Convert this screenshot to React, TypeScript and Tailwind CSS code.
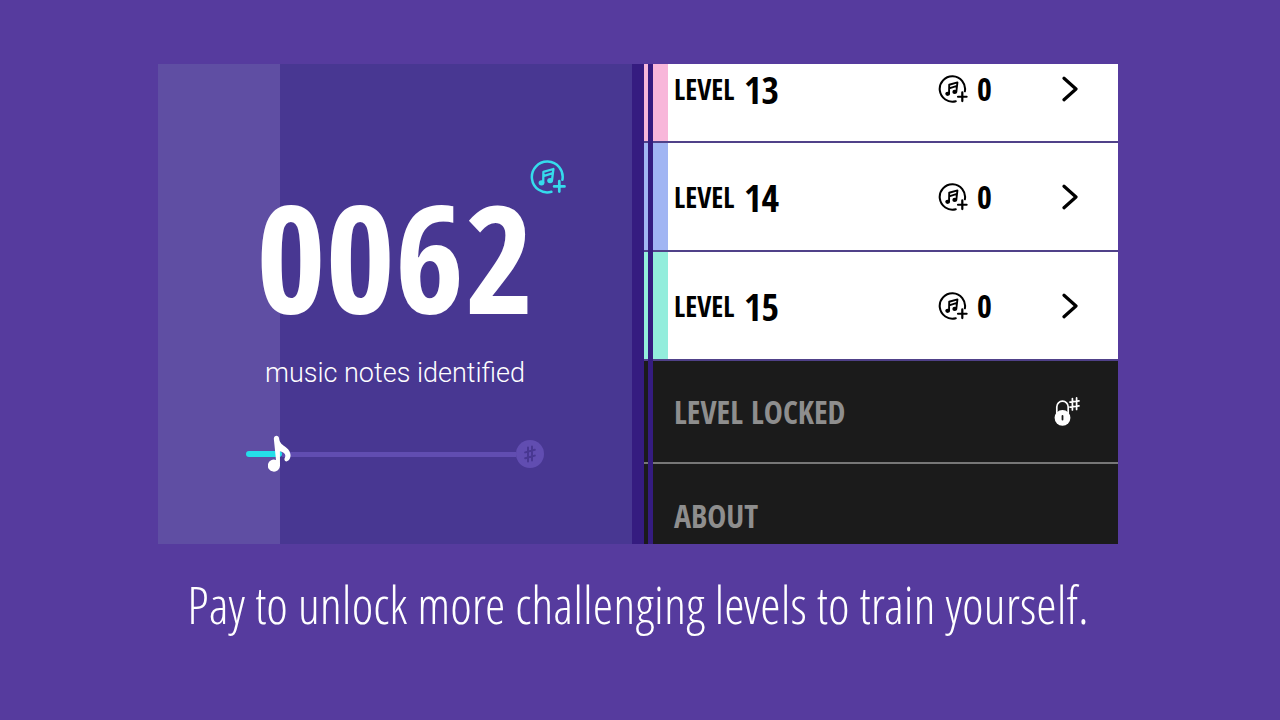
const levels = [
  { number: 13, notes: 0, color: 'bg-[#f8b7da]', row: 'h-[79px] pb-[28px]' },
  { number: 14, notes: 0, color: 'bg-[#a1b5f3]', row: 'h-[109px]' },
  { number: 15, notes: 0, color: 'bg-[#93eddc]', row: 'h-[109px]' },
];

function NotesIcon({ className }: { className: string }) {
  return (
    <svg viewBox="0 0 36 34" className={className} fill="none" stroke="currentColor" aria-hidden="true">
      <path d="M21.4 31.8A15.4 15.4 0 1 1 32.4 19.8" strokeWidth="2.5" strokeLinecap="round" />
      <path d="M13.2 22.6L13.4 11.8L23.4 9L22 20.4M13.3 16.2L22.8 13.2" strokeWidth="2.3" strokeLinecap="round" strokeLinejoin="round" />
      <ellipse cx="11.5" cy="22.8" rx="2.9" ry="2.6" fill="currentColor" stroke="none" />
      <ellipse cx="20.1" cy="20.6" rx="2.9" ry="2.6" fill="currentColor" stroke="none" />
      <path d="M29.3 21.2V31.6M24.1 26.4H34.5" strokeWidth="2.7" strokeLinecap="round" />
    </svg>
  );
}

function EighthNote() {
  return (
    <svg viewBox="0 0 24 38" className="h-[38px] w-6" aria-hidden="true">
      <path
        d="M5.9 4.6C5.1 .2 10.7 -.6 11.1 3.4C11.5 8.2 15 10 18.1 12.4C23.6 16.6 23.6 22.4 20.4 25.6C18 27.6 15.4 25.6 16.8 22.8C18.4 19.4 16.4 17.6 11.9 16.2L12 30.8A6.1 6 0 1 1 8 25Z"
        fill="#fff"
      />
    </svg>
  );
}

function Sharp() {
  return (
    <svg viewBox="0 0 12 18" className="h-[18px] w-3" fill="none" stroke="currentColor" strokeWidth="2" aria-hidden="true">
      <path d="M4 2.6V16.4M8 1.6V15.4M1.2 7.4L10.8 4.8M1.2 13.2L10.8 10.6" strokeLinecap="round" />
    </svg>
  );
}

function LockIcon() {
  return (
    <svg viewBox="0 0 26 30" className="h-[30px] w-[26px]" fill="none" aria-hidden="true">
      <path d="M2.8 17V10A5.7 5.8 0 0 1 14.2 10V17" stroke="#fff" strokeWidth="1.7" />
      <circle cx="8.5" cy="20.8" r="7.9" fill="#fff" />
      <path d="M8.5 19V22.6" stroke="#1b1b1b" strokeWidth="1.8" strokeLinecap="round" />
      <path d="M18.4 1.6V13M22.6 .9V12.4M16 5.2L25 3.8M16 10.2L25 8.8" stroke="#fff" strokeWidth="1.7" strokeLinecap="round" />
    </svg>
  );
}

function Stripes({ color }: { color: string }) {
  return (
    <span className="flex self-stretch" aria-hidden="true">
      <span className={`w-1 ${color}`} />
      <span className="w-[5px] bg-[#351c80]" />
      <span className={`w-[15px] ${color}`} />
    </span>
  );
}

function Score() {
  return (
    <section className="flex min-w-0 flex-1 bg-[linear-gradient(to_right,#5f4ea3_122px,#483792_122px)]">
      <div className="flex w-full flex-col items-center pt-24">
        <div className="flex w-full justify-end pr-[66px]">
          <NotesIcon className="h-[34px] w-9 text-[#35dcec]" />
        </div>
        <p className="-mt-[4px] text-[150px] leading-[132px] font-bold text-white">0062</p>
        <p className="mt-[33px] font-['Roboto',sans-serif] text-[27px] leading-9 font-light text-white">music notes identified</p>
        <div className="relative mt-[42px] flex h-[42px] w-[298px] items-center">
          <span className="h-[6px] w-9 rounded-full bg-[#25deea]" />
          <span className="h-[5px] flex-1 bg-[#614db1]" />
          <span className="flex size-7 items-center justify-center rounded-full bg-[#614db1] text-[#483792]">
            <Sharp />
          </span>
          <span className="absolute top-[2px] left-[22px]">
            <EighthNote />
          </span>
          <input
            type="range"
            min={0}
            max={500}
            defaultValue={62}
            aria-label="music notes identified"
            className="absolute inset-0 w-full cursor-pointer opacity-0"
          />
        </div>
      </div>
    </section>
  );
}

function LevelList() {
  return (
    <nav className="flex min-w-0 flex-1 flex-col border-l-12 border-[#351c80]">
      {levels.map((level) => (
        <button key={level.number} type="button" className="flex bg-white text-left font-bold text-black">
          <Stripes color={`border-b-2 border-[#504189] ${level.color}`} />
          <span className={`flex flex-1 items-center border-b-2 border-[#504189] pr-10 pl-[6px] ${level.row}`}>
            <span className="w-[70px] text-[28px] leading-8">LEVEL</span>
            <span className="flex-1 text-[38px] leading-10">{level.number}</span>
            <NotesIcon className="h-[28px] w-[30px]" />
            <span className="w-[94px] pl-[9px] text-[32px] leading-8">{level.notes}</span>
            <svg viewBox="0 0 16 26" className="h-[26px] w-4" fill="none" stroke="#000" strokeWidth="3.2" strokeLinecap="round" strokeLinejoin="round" aria-hidden="true">
              <path d="M2 2.2L14 13L2 23.8" />
            </svg>
          </span>
        </button>
      ))}
      <button type="button" disabled className="flex bg-[#1b1b1b] text-left text-[32px] leading-10 font-bold text-[#8e8e8e]">
        <Stripes color="border-b-2 border-[#777777] bg-[#1b1b1b]" />
        <span className="flex h-[103px] flex-1 items-center justify-between border-b-2 border-[#777777] pr-[38px] pl-[6px]">
          LEVEL LOCKED
          <LockIcon />
        </span>
      </button>
      <button type="button" className="flex bg-[#1b1b1b] text-left text-[32px] leading-10 font-bold text-[#8e8e8e]">
        <Stripes color="bg-[#1b1b1b]" />
        <span className="flex-1 pt-8 pb-2 pl-[6px]">ABOUT</span>
      </button>
    </nav>
  );
}

export default function App() {
  return (
    <main className="flex min-h-screen flex-col items-center bg-[#563b9e] pt-16 pr-1 font-['Open_Sans_Condensed','Roboto_Condensed',sans-serif]">
      <div className="flex w-full max-w-[960px] overflow-hidden">
        <Score />
        <LevelList />
      </div>
      <h1 className="mt-[30px] text-center font-['Open_Sans_Condensed_Light','Roboto_Condensed',sans-serif] text-[52px] leading-[60px] font-light text-white">
        Pay to unlock more challenging levels to train yourself.
      </h1>
    </main>
  );
}
